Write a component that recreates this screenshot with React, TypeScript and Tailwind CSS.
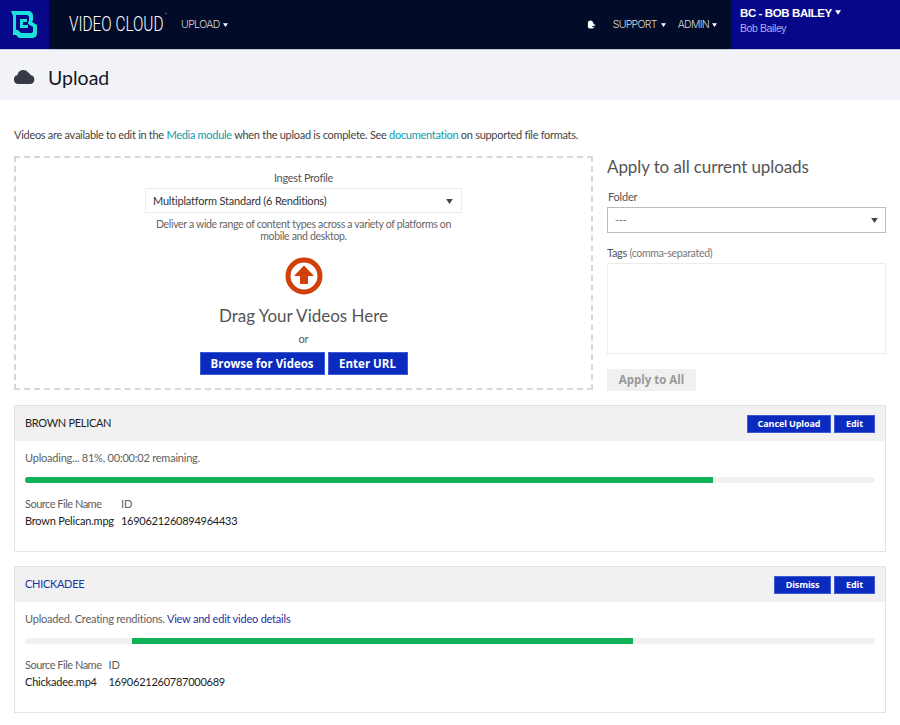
import React from 'react';

const Caret = ({ className = '' }: { className?: string }) => (
  <svg viewBox="0 0 8 6" className={`inline-block w-[5px] h-[4px] ${className}`} fill="currentColor">
    <path d="M0 0h8L4 6z" />
  </svg>
);

const Logo = () => (
  <svg viewBox="0 0 27 27" className="w-[27px] h-[27px]" fill="none">
    <path
      fillRule="evenodd"
      d="M0 0h17c3 0 5 2 5 5v4l-1 2 5 3v8c0 3-2 5-5 5H8l-3-3H2V5zM5 4v15l2 0 3 3h10c1 0 2-1 2-2v-4l-5-3v-2c1-1 1-1 1-2V6c0-1-1-2-2-2z"
      fill="#1de0d8"
    />
    <path d="M9 8h7v3H9zM9 14h8v3H9zM9 8h3v9H9z" fill="#1de0d8" />
  </svg>
);

const CloudIcon = () => (
  <svg viewBox="0 0 21 15" className="w-[21px] h-[15px]" fill="#363a45">
    <path d="M4.500 15A4.500 4.500 0 0 1 3.500 6.100 6 6 0 0 1 14.500 3.700 3.600 3.600 0 0 1 16.500 6.100 4.500 4.500 0 0 1 16.500 15z" />
  </svg>
);

const BellIcon = () => (
  <svg viewBox="0 0 10 10" className="w-[9px] h-[9px]" fill="#ffffff">
    <path d="M1 8V3C1 1.500 2.500 0.500 4 0.500c1.500 0 2.500 1 3 3l2.500 2.500-2 .5-2 .5 1 1 2-.5C8 9 6 9.500 4 9.500 2.500 9.500 1.500 9 1 8z" />
  </svg>
);

const UploadCircle = () => (
  <svg viewBox="0 0 38 38" className="w-[38px] h-[38px]">
    <circle cx="19" cy="19" r="16" fill="none" stroke="#d13f0a" strokeWidth="5" />
    <path d="M19 8.500 29 19h-6v8h-8v-8H9z" fill="#d13f0a" />
  </svg>
);

const BlueButton = ({ children, className = '' }: { children: React.ReactNode; className?: string }) => (
  <button
    className={`bg-[#0a2bbd] text-white font-bold border border-[#3d5bd0] font-['Open_Sans',sans-serif] ${className}`}
  >
    {children}
  </button>
);

interface UploadCardProps {
  title: string;
  titleClass: string;
  actions: { label: string; width: string }[];
  status: React.ReactNode;
  fileName: string;
  id: string;
  bar: React.ReactNode;
  className: string;
}

const UploadCard = ({ title, titleClass, actions, status, fileName, id, bar, className }: UploadCardProps) => (
  <div className={`border border-[#e3e3e3] ${className}`}>
    <div className="flex items-center justify-between h-[35px] bg-[#f1f1f1] pl-[10px] pr-[10px]">
      <span className={`text-[11px] tracking-[-0.3px] ${titleClass}`}>{title}</span>
      <div className="flex gap-[3px]">
        {actions.map((action) => (
          <BlueButton key={action.label} className={`h-[18px] text-[9px] tracking-[-0.1px] leading-none ${action.width}`}>
            {action.label}
          </BlueButton>
        ))}
      </div>
    </div>
    <div className="px-[10px]">
      <div className="text-[11px] tracking-[-0.22px] leading-[16px] mt-[9px] text-[#606060]">{status}</div>
      {bar}
      <div className="flex gap-[7px] mt-[12px] text-[11px] leading-[17px]">
        <div>
          <div className="text-[#606060] tracking-[-0.5px]">Source File Name</div>
          <div className="text-[#222222] tracking-[-0.2px]">{fileName}</div>
        </div>
        <div>
          <div className="text-[#606060]">ID</div>
          <div className="text-[#222222] tracking-[-0.25px]">{id}</div>
        </div>
      </div>
    </div>
  </div>
);

export default function App() {
  return (
    <div className="w-[900px] h-[725px] overflow-hidden bg-white font-['Lato',sans-serif] text-[#555555]">
      <header className="flex h-[49px] bg-[#020c28]">
        <div className="flex items-center justify-center w-[49px] bg-[#07078a]">
          <Logo />
        </div>
        <div className="flex items-center pl-[20px] font-['Inter',sans-serif] text-[#d8d8d8]">
          <span className="relative font-['Roboto',sans-serif] font-light text-[21px] text-white scale-x-[0.73] origin-left w-[112px] whitespace-nowrap">
            VIDEO CLOUD
            <span className="absolute left-[131px] top-[3px] text-[5px] leading-none">™</span>
          </span>
          <span className="text-[10.500px] font-light tracking-[-0.6px]">UPLOAD</span>
          <Caret className="ml-[3px] text-white" />
        </div>
        <div className="flex items-center ml-auto font-['Inter',sans-serif] text-[10.500px] font-light text-[#d8d8d8] tracking-[-0.7px]">
          <BellIcon />
          <span className="ml-[17px]">SUPPORT</span>
          <Caret className="ml-[4px] text-white" />
          <span className="ml-[12px]">ADMIN</span>
          <Caret className="ml-[3px] text-white" />
          <div className="flex flex-col justify-center w-[169px] h-[49px] ml-[14px] pl-[9px] pb-[9px] bg-[#07078a] tracking-normal font-['Liberation_Sans',sans-serif]">
            <div className="text-[11.500px] tracking-[-0.4px] leading-[15px] font-bold text-white">
              BC - BOB BAILEY <Caret className="!w-[6px] !h-[5px] ml-[1px] mb-[2px]" />
            </div>
            <div className="text-[10.500px] tracking-[-0.4px] leading-[14px] font-normal text-[#b0b0ee]">Bob Bailey</div>
          </div>
        </div>
      </header>
      <div className="flex items-center h-[51px] pl-[14px] pt-[5px] border-t border-[#c9cbd6] bg-[#f2f3f9]">
        <span className="-mt-[3px]"><CloudIcon /></span>
        <h1 className="ml-[13px] text-[19.500px] text-[#15171c]">Upload</h1>
      </div>
      <div className="px-[14px]">
        <p className="mt-[28px] text-[11px] tracking-[-0.29px] leading-[14px] text-[#444444]">
          Videos are available to edit in the <span className="text-[#0a9dad]">Media module</span> when the upload is complete. See{' '}
          <span className="text-[#0a9dad]">documentation</span> on supported file formats.
        </p>
        <div className="flex h-[234px] mt-[14px]">
          <div className="flex flex-col items-center w-[579px] h-[234px] border-2 border-dashed border-[#d8d8d8]">
            <div className="mt-[13px] text-[11px] tracking-[-0.3px] leading-[14px] text-[#555555]">Ingest Profile</div>
            <div className="flex items-center justify-between w-[317px] h-[25px] mt-[3px] pt-[1px] pl-[7px] pr-[8px] border border-[#ececec] text-[11px] tracking-[-0.2px] text-[#333333]">
              Multiplatform Standard (6 Renditions)
              <Caret className="!w-[7px] !h-[5px] text-[#444444]" />
            </div>
            <div className="w-[310px] mt-[5px] text-center text-[10.500px] tracking-[-0.33px] leading-[12px] text-[#666666]">
              Deliver a wide range of content types across a variety of platforms on mobile and desktop.
            </div>
            <div className="mt-[15px] leading-none"><UploadCircle /></div>
            <div className="mt-[9px] text-[17px] leading-[24px] text-[#555555]">Drag Your Videos Here</div>
            <div className="mt-[4px] text-[11px] leading-[14px] text-[#555555]">or</div>
            <div className="flex gap-[3px] mt-[6px]">
              <BlueButton className="w-[125px] h-[23px] text-[11.500px] leading-none">Browse for Videos</BlueButton>
              <BlueButton className="w-[80px] h-[23px] text-[11.500px] leading-none">Enter URL</BlueButton>
            </div>
          </div>
          <div className="w-[279px] ml-[14px]">
            <h2 className="mt-0 text-[17px] tracking-[-0.1px] leading-[22px] text-[#555555]">Apply to all current uploads</h2>
            <div className="mt-[12px] pl-[1px] text-[11px] tracking-[-0.2px] leading-[14px] text-[#555555]">Folder</div>
            <div className="flex items-center justify-between h-[26px] mt-[3px] pt-[1px] pl-[7px] pr-[7px] border border-[#bdbdbd] text-[10.500px] text-[#777777]">
              ---
              <Caret className="!w-[7px] !h-[5px] text-[#444444]" />
            </div>
            <div className="mt-[13px] text-[11px] tracking-[-0.3px] leading-[14px] text-[#555555]">
              Tags <span className="text-[10.500px] tracking-[-0.3px] text-[#777777]">(comma-separated)</span>
            </div>
            <div className="h-[91px] mt-[3px] border border-[#ececec]"></div>
            <button className="block w-[89px] h-[22px] mt-[15px] bg-[#f0f0f0] font-['Open_Sans',sans-serif] font-bold text-[11.500px] leading-none text-[#999999]">
              Apply to All
            </button>
          </div>
        </div>
        <UploadCard
          className="h-[147px] mt-[15px]"
          title="BROWN PELICAN"
          titleClass="text-[#222222]"
          actions={[
            { label: 'Cancel Upload', width: 'w-[84px]' },
            { label: 'Edit', width: 'w-[41px]' },
          ]}
          status="Uploading... 81%, 00:00:02 remaining."
          fileName="Brown Pelican.mpg"
          id="1690621260894964433"
          bar={
            <div className="h-[6px] mt-[11px] rounded-full bg-[#f1f1f1] overflow-hidden">
              <div className="h-full w-[688px] bg-[#10b257]"></div>
            </div>
          }
        />
        <UploadCard
          className="h-[147px] mt-[14px]"
          title="CHICKADEE"
          titleClass="text-[#2233a8]"
          actions={[
            { label: 'Dismiss', width: 'w-[57px]' },
            { label: 'Edit', width: 'w-[41px]' },
          ]}
          status={
            <>
              Uploaded. Creating renditions. <span className="text-[#1f32a4]">View and edit video details</span>
            </>
          }
          fileName="Chickadee.mp4"
          id="1690621260787000689"
          bar={
            <div className="h-[6px] mt-[11px] rounded-full bg-[#f1f1f1] overflow-hidden pl-[107px]">
              <div className="h-full w-[501px] bg-[#10b257]"></div>
            </div>
          }
        />
      </div>
    </div>
  );
}
